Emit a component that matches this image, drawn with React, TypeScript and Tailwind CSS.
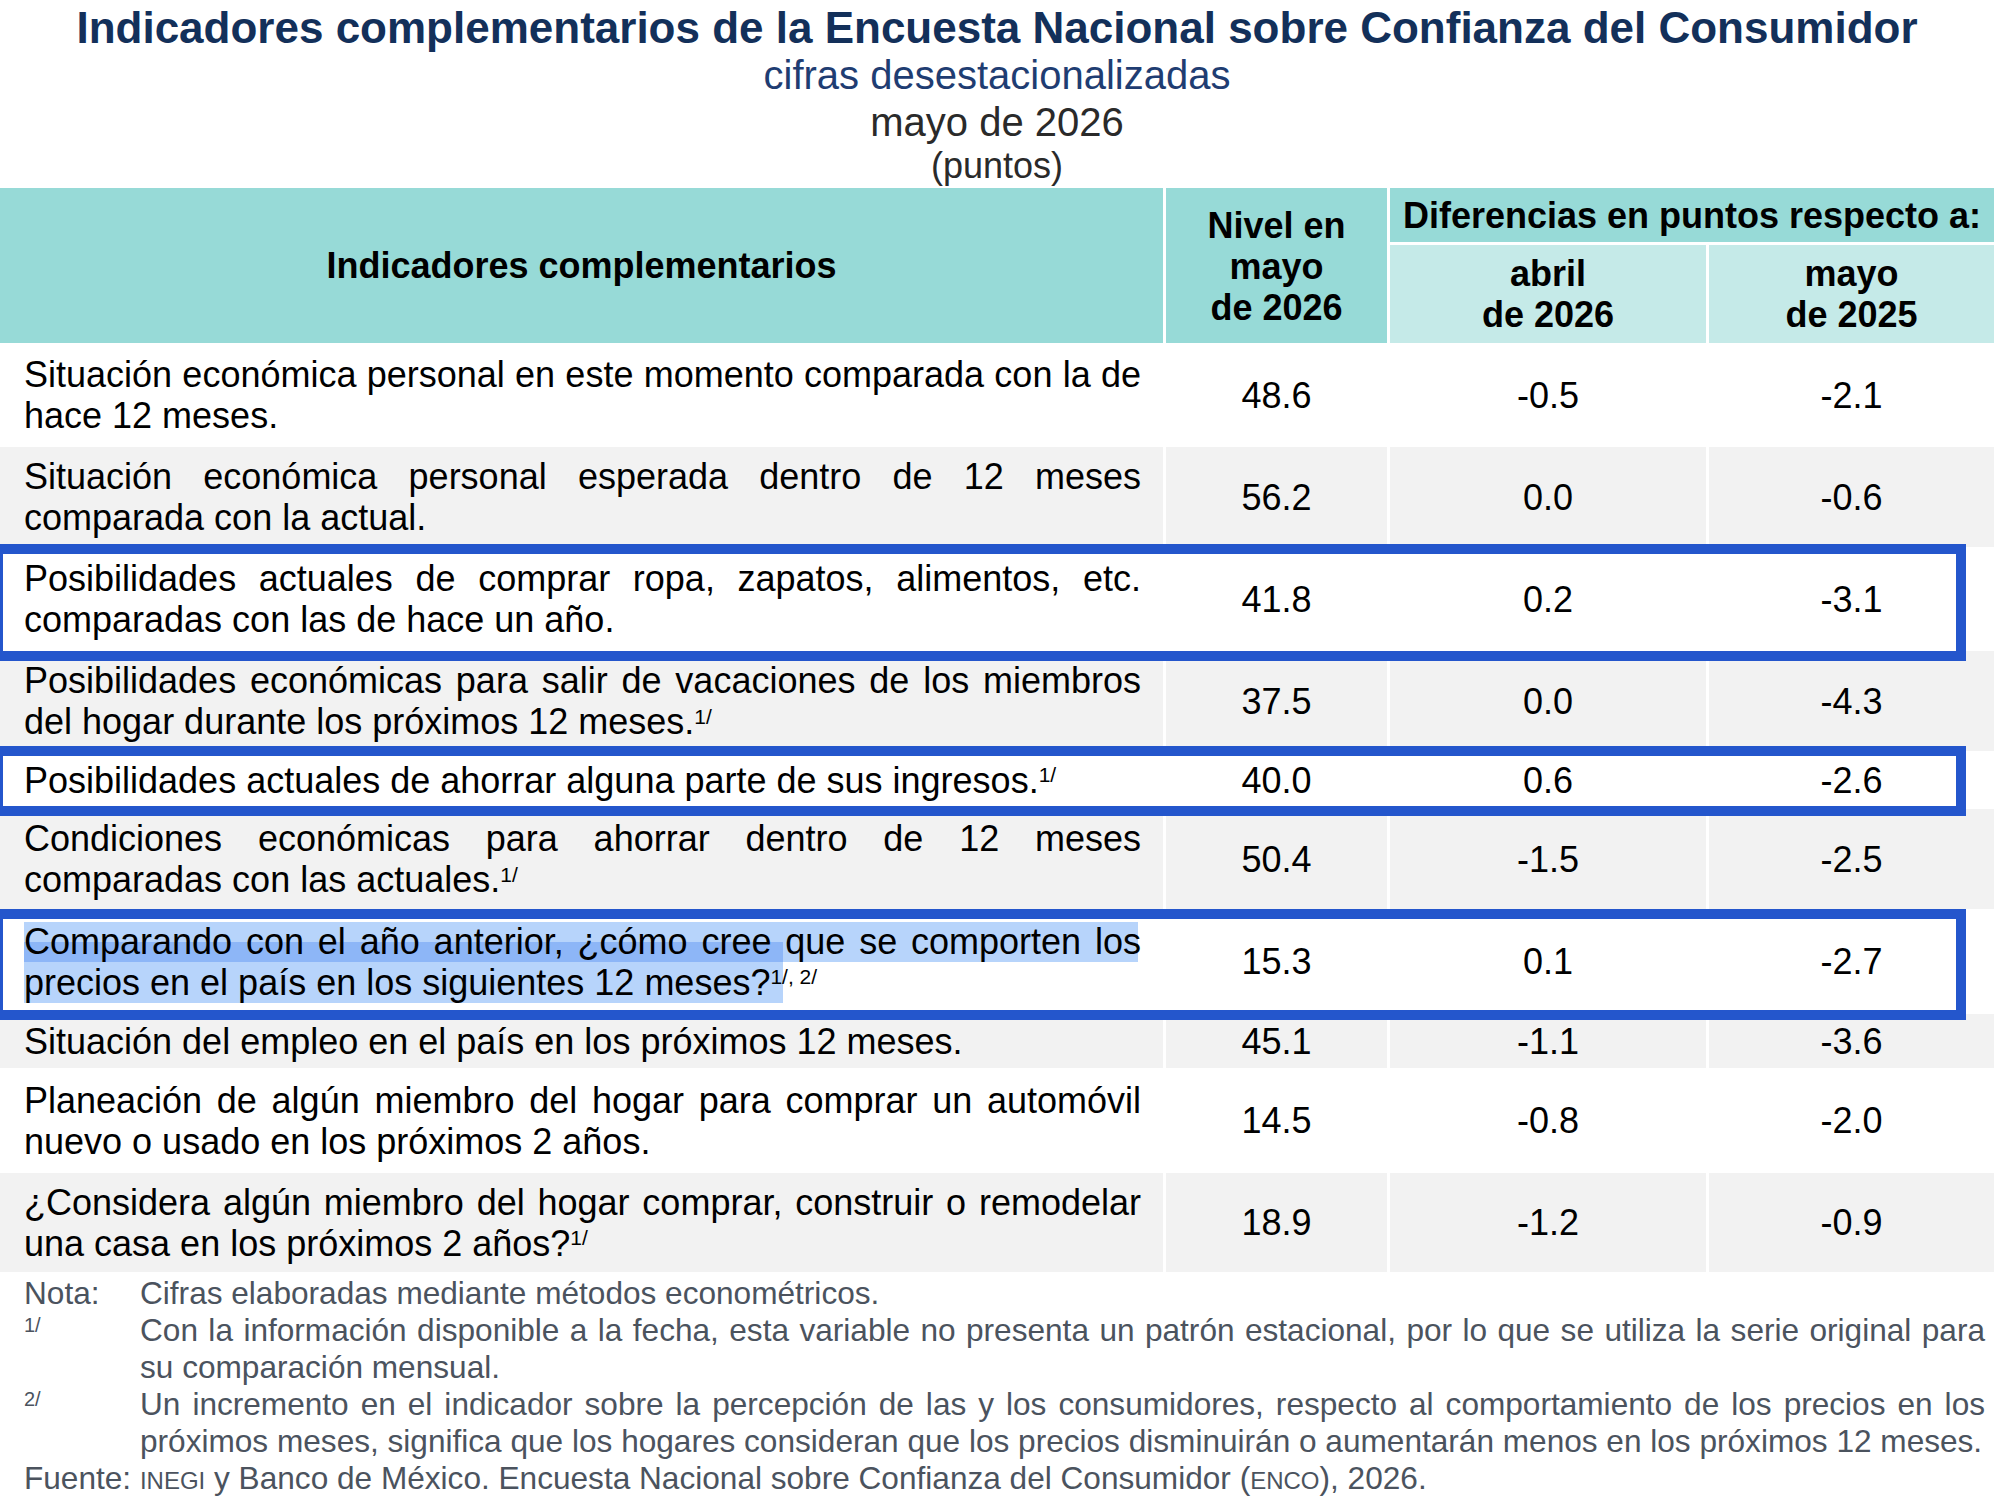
import React from 'react';

type Row = {
  text: React.ReactNode;
  nivel: string;
  abr: string;
  may: string;
  h: string;
  gray: boolean;
  mark?: boolean;
};

const Sup = ({ children }: { children: React.ReactNode }) => (
  <sup className="text-[21px]">{children}</sup>
);

const rows: Row[] = [
  { text: 'Situación económica personal en este momento comparada con la de hace 12 meses.', nivel: '48.6', abr: '-0.5', may: '-2.1', h: 'h-[104px]', gray: false },
  { text: 'Situación económica personal esperada dentro de 12 meses comparada con la actual.', nivel: '56.2', abr: '0.0', may: '-0.6', h: 'h-[100px]', gray: true },
  { text: 'Posibilidades actuales de comprar ropa, zapatos, alimentos, etc. comparadas con las de hace un año.', nivel: '41.8', abr: '0.2', may: '-3.1', h: 'h-[104px]', gray: false },
  { text: <>Posibilidades económicas para salir de vacaciones de los miembros del hogar durante los próximos 12 meses.<Sup>1/</Sup></>, nivel: '37.5', abr: '0.0', may: '-4.3', h: 'h-[100px]', gray: true },
  { text: <>Posibilidades actuales de ahorrar alguna parte de sus ingresos.<Sup>1/</Sup></>, nivel: '40.0', abr: '0.6', may: '-2.6', h: 'h-[58px]', gray: false },
  { text: <>Condiciones económicas para ahorrar dentro de 12 meses comparadas con las actuales.<Sup>1/</Sup></>, nivel: '50.4', abr: '-1.5', may: '-2.5', h: 'h-[100px]', gray: true },
  { text: <>Comparando con el año anterior, ¿cómo cree que se comporten los precios en el país en los siguientes 12 meses?<Sup>1/, 2/</Sup></>, nivel: '15.3', abr: '0.1', may: '-2.7', h: 'h-[105px]', gray: false, mark: true },
  { text: 'Situación del empleo en el país en los próximos 12 meses.', nivel: '45.1', abr: '-1.1', may: '-3.6', h: 'h-[54px]', gray: true },
  { text: 'Planeación de algún miembro del hogar para comprar un automóvil nuevo o usado en los próximos 2 años.', nivel: '14.5', abr: '-0.8', may: '-2.0', h: 'h-[105px]', gray: false },
  { text: <>¿Considera algún miembro del hogar comprar, construir o remodelar una casa en los próximos 2 años?<Sup>1/</Sup></>, nivel: '18.9', abr: '-1.2', may: '-0.9', h: 'h-[99px]', gray: true },
];

const cols = 'grid grid-cols-[1163px_221px_316px_285px] gap-x-[3px]';

const TableRow = ({ row }: { row: Row }) => {
  const bg = row.gray ? 'bg-[#f2f2f2]' : 'bg-white';
  return (
    <div className={`${cols} ${row.h}`}>
      <div className={`${bg} relative flex items-center pl-6 pr-[22px]`}>
        {row.mark && (
          <>
            {/* selection highlight */}
            <div className="absolute left-6 top-[13px] w-[1114px] h-[40px] bg-[#b7d4fb]" />
            <div className="absolute left-6 top-[33px] w-[759px] h-[61px] bg-[#b7d4fb]" />
            <div className="absolute left-6 top-[33px] w-[759px] h-[20px] bg-[#8db6f7]" />
          </>
        )}
        <p className="relative text-justify w-full">{row.text}</p>
      </div>
      <div className={`${bg} flex items-center justify-center`}>{row.nivel}</div>
      <div className={`${bg} flex items-center justify-center`}>{row.abr}</div>
      <div className={`${bg} flex items-center justify-center`}>{row.may}</div>
    </div>
  );
};

const App: React.FC = () => (
  <div className="w-[1994px] min-h-[1510px] bg-white text-black font-['Liberation_Sans',Arial,sans-serif] overflow-hidden">
    {/* Titles */}
    <div className="text-center">
      <h1 className="pt-[2px] text-[44px] leading-[52px] font-bold text-[#13305a]">
        Indicadores complementarios de la Encuesta Nacional sobre Confianza del Consumidor
      </h1>
      <div className="text-[40px] leading-[42px] text-[#1f3d72]">cifras desestacionalizadas</div>
      <div className="text-[40px] leading-[52px] text-[#2a2a2a]">mayo de 2026</div>
      <div className="text-[36px] leading-[36px] text-[#2a2a2a] mb-[4px]">(puntos)</div>
    </div>

    {/* Header */}
    <div className="grid grid-cols-[1163px_221px_316px_285px] grid-rows-[54px_98px] gap-[3px] text-[36px] leading-[41px] font-bold text-center">
      <div className="row-span-2 bg-[#97dad7] flex items-center justify-center">Indicadores complementarios</div>
      <div className="row-span-2 bg-[#97dad7] flex items-center justify-center pt-[2px]">
        Nivel en
        <br />
        mayo
        <br />
        de 2026
      </div>
      <div className="col-span-2 bg-[#97dad7] flex items-center justify-center whitespace-nowrap">
        Diferencias en puntos respecto a:
      </div>
      <div className="bg-[#c5eae8] flex items-center justify-center">
        abril
        <br />
        de 2026
      </div>
      <div className="bg-[#c5eae8] flex items-center justify-center">
        mayo
        <br />
        de 2025
      </div>
    </div>

    {/* Body */}
    <div className="relative text-[36px] leading-[41px]">
      {rows.map((r, i) => (
        <TableRow key={i} row={r} />
      ))}
      {/* annotation boxes */}
      <div className="absolute left-[-7px] top-[201px] w-[1973px] h-[117px] border-[10px] border-[#2456cc]" />
      <div className="absolute left-[-7px] top-[403px] w-[1973px] h-[70px] border-[10px] border-[#2456cc]" />
      <div className="absolute left-[-7px] top-[566px] w-[1973px] h-[111px] border-[10px] border-[#2456cc]" />
    </div>

    {/* Notes */}
    <div className="mt-[3px] pl-6 pr-[9px] grid grid-cols-[116px_1845px] text-[31.6px] leading-[37px] text-[#4b535e]">
      <div>Nota:</div>
      <div className="text-justify">Cifras elaboradas mediante métodos econométricos.</div>
      <div className="text-[20px] leading-[26px]">1/</div>
      <div className="text-justify">
        Con la información disponible a la fecha, esta variable no presenta un patrón estacional, por lo que se utiliza la serie original para su comparación mensual.
      </div>
      <div className="text-[20px] leading-[26px]">2/</div>
      <div className="text-justify">
        Un incremento en el indicador sobre la percepción de las y los consumidores, respecto al comportamiento de los precios en los próximos meses, significa que los hogares consideran que los precios disminuirán o aumentarán menos en los próximos 12 meses.
      </div>
      <div className="col-span-2">
        Fuente: <span className="text-[24px]">INEGI</span> y Banco de México. Encuesta Nacional sobre Confianza del Consumidor (<span className="text-[24px]">ENCO</span>), 2026.
      </div>
    </div>
  </div>
);

export default App;
